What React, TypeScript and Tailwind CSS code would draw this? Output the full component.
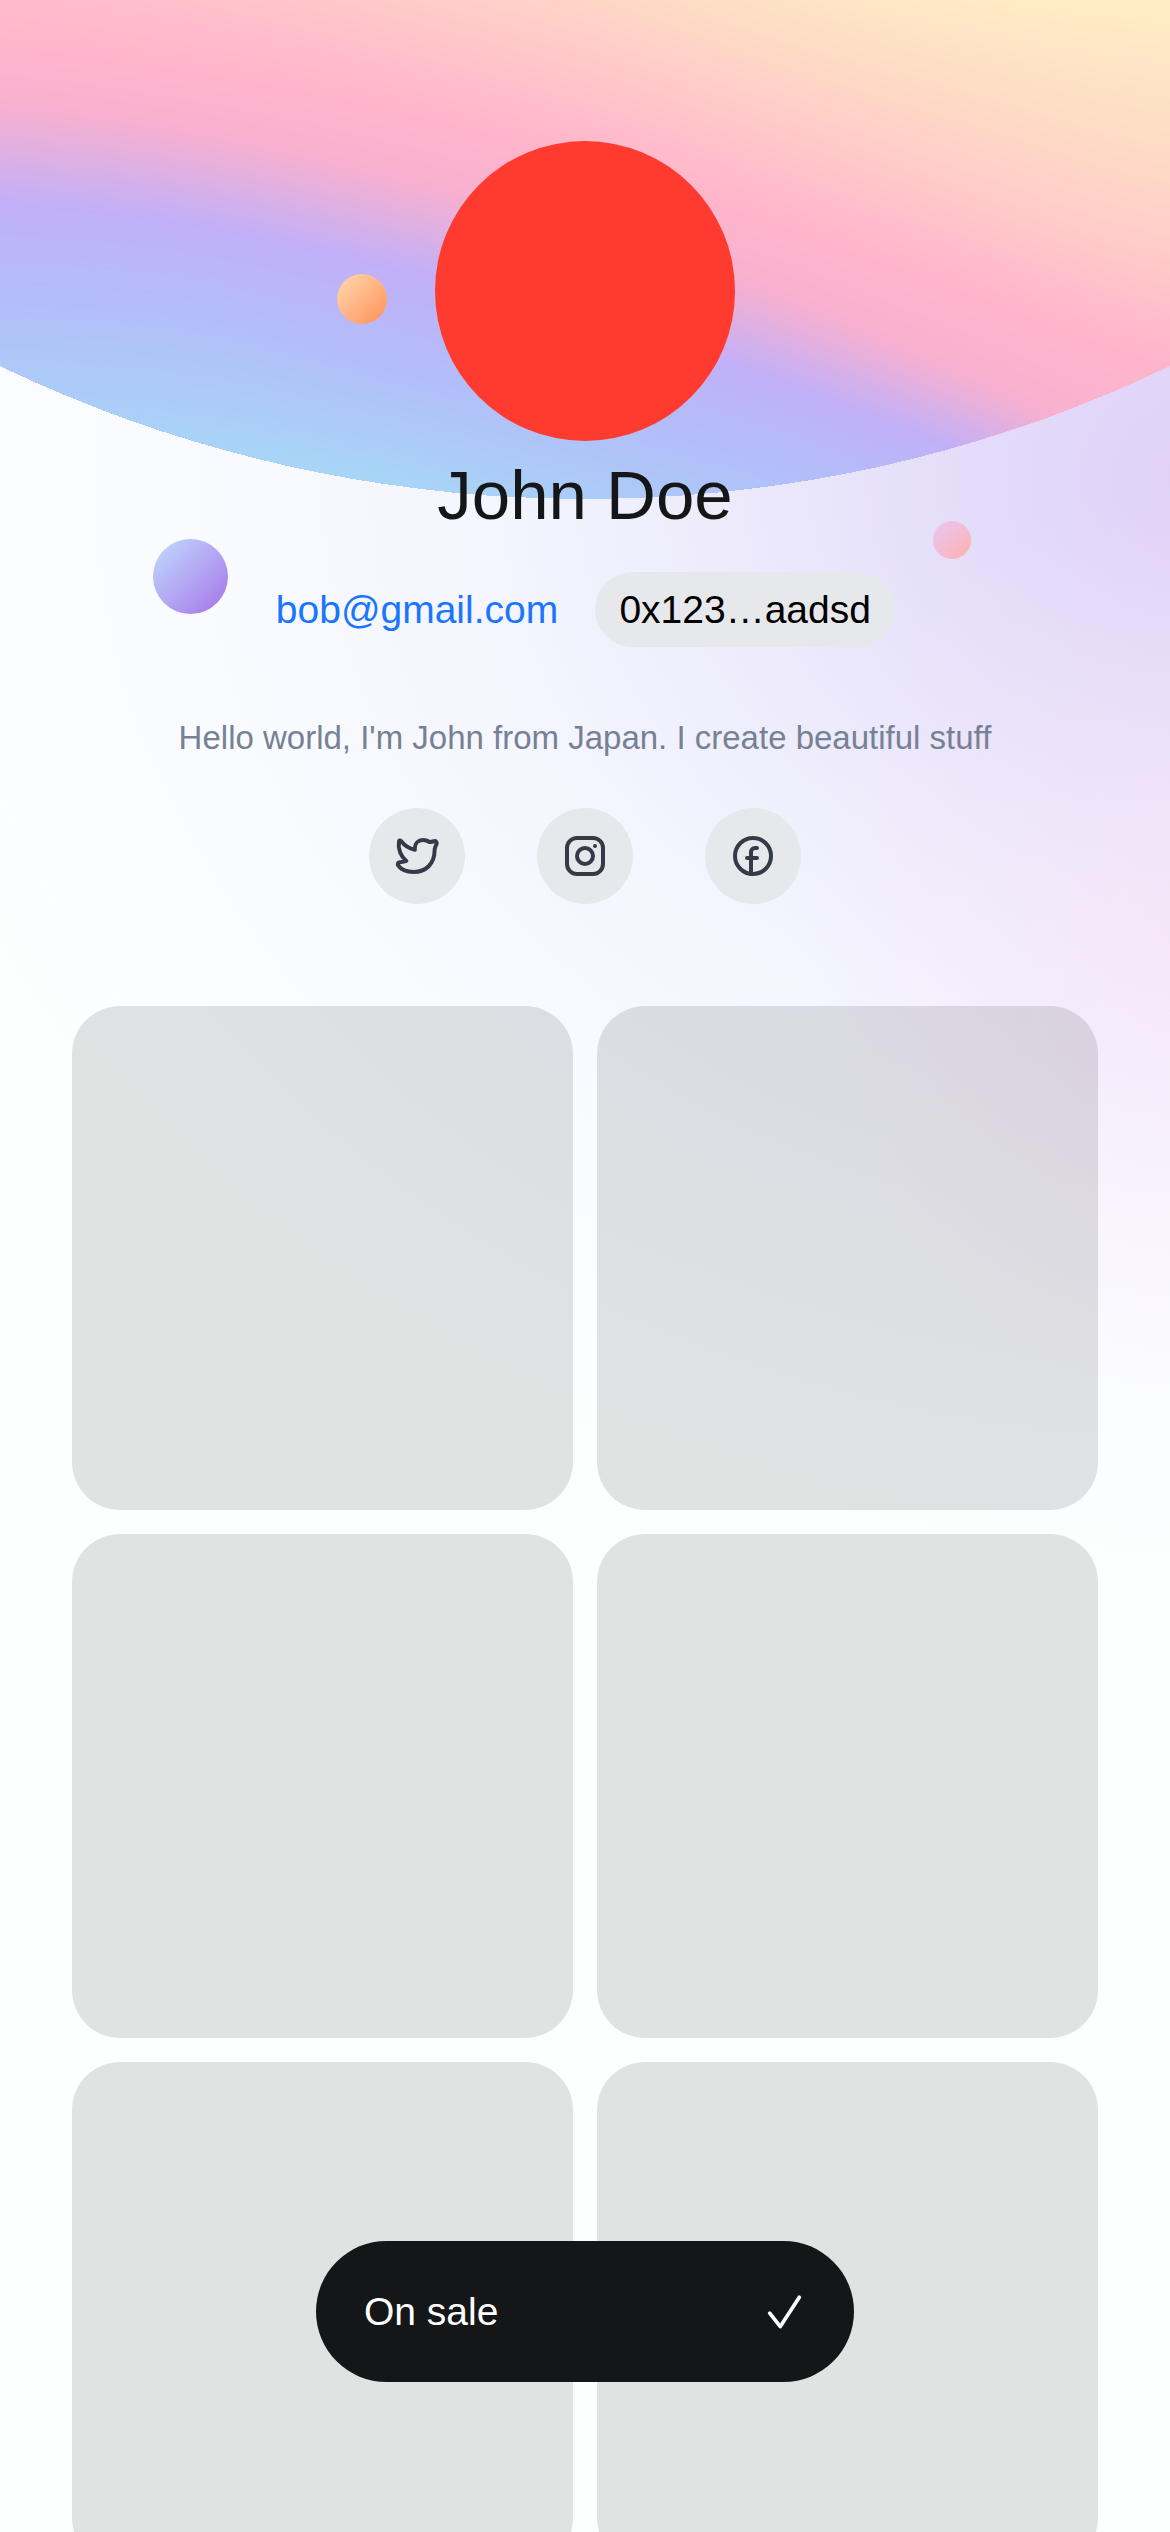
import React from "react";

type Rgb = [number, number, number];
type Band = { color: Rgb; ys: number[] };

const columns = [0, 195, 390, 585, 780, 975, 1170];

// Each band lists the height at which its colour crosses every column.
const bands: Band[] = [
  { color: [255, 236, 197], ys: [-300, -250, -190, -125, -60, -12, 8] },
  { color: [254, 220, 197], ys: [-190, -150, -100, -35, 35, 90, 142] },
  { color: [255, 203, 201], ys: [-105, -60, -5, 48, 118, 190, 253] },
  { color: [255, 181, 204], ys: [42, 67, 104, 156, 220, 288, 354] },
  { color: [247, 176, 208], ys: [105, 131, 175, 228, 294, 378, 465] },
  { color: [193, 176, 248], ys: [203, 224, 267, 315, 382, 457, 540] },
  { color: [178, 190, 249], ys: [302, 317, 370, 415, 466, 545, 630] },
  { color: [172, 204, 248], ys: [388, 402, 440, 495, 565, 645, 730] },
  { color: [166, 216, 246], ys: [446, 464, 492, 560, 640, 730, 820] },
];

const STEPS = 28;

function curve(ys: number[]) {
  let d = `M0 ${ys[0].toFixed(2)}`;
  for (let i = 0; i < ys.length - 1; i++) {
    const before = ys[Math.max(i - 1, 0)];
    const after = ys[Math.min(i + 2, ys.length - 1)];
    const c1 = ys[i] + (ys[i + 1] - before) / 6;
    const c2 = ys[i + 1] - (after - ys[i]) / 6;
    d += `C${columns[i] + 65} ${c1.toFixed(2)} ${columns[i + 1] - 65} ${c2.toFixed(2)} ${columns[i + 1]} ${ys[i + 1].toFixed(2)}`;
  }
  return `${d}V900H0Z`;
}

const layers = bands.slice(0, -1).flatMap((band, i) => {
  const next = bands[i + 1];
  return Array.from({ length: STEPS }, (_, s) => {
    const t = s / STEPS;
    const mix = (a: number, b: number) => a + (b - a) * t;
    const [r, g, b] = band.color.map((c, k) => Math.round(mix(c, next.color[k])));
    return { d: curve(band.ys.map((y, k) => mix(y, next.ys[k]))), fill: `rgb(${r},${g},${b})` };
  });
});

function Banner() {
  return (
    <svg className="absolute left-0 top-0" width="1170" height="500" viewBox="0 0 1170 500">
      <defs>
        <clipPath id="dome">
          <circle cx="585" cy="-855" r="1353.5" />
        </clipPath>
      </defs>
      <g clipPath="url(#dome)">
        <rect width="1170" height="500" fill="#ffecc5" />
        {layers.map((l, i) => (
          <path key={i} d={l.d} fill={l.fill} />
        ))}
      </g>
    </svg>
  );
}

const iconProps = {
  width: 48,
  height: 48,
  viewBox: "0 0 24 24",
  fill: "none",
  stroke: "#363a48",
  strokeWidth: 2,
  strokeLinecap: "round" as const,
  strokeLinejoin: "round" as const,
};

function TwitterIcon() {
  return (
    <svg {...iconProps} className="overflow-visible">
      <path d="M3.900 4.400C5.600 6.600 8 8.300 10.900 8.900V8.200C10.900 5.700 12.600 4 15 4c1.300 0 2.200.3 3.200 1 .8 0 1.600-.2 2.400-.4.900-.2 1.500.5 1.200 1.300l-.7 1.700c-.3.700-.3 1.100-.3 1.700C20.700 15.900 16.500 20 10.300 20c-3 0-6-.9-7.600-3.100-.6-.8-.3-1.700.7-1.800 1.100-.1 2.300-.2 3.300-.6C4 12.400 2.300 8.600 3 4.700c.1-.5.600-.6.900-.3z" />
    </svg>
  );
}

function InstagramIcon() {
  return (
    <svg {...iconProps}>
      <rect x="3" y="3" width="18" height="18" rx="5" />
      <circle cx="12" cy="12" r="4" />
      <circle cx="17" cy="7" r="1" fill="#363a48" stroke="none" />
    </svg>
  );
}

function FacebookIcon() {
  return (
    <svg {...iconProps}>
      <circle cx="12" cy="12" r="9" />
      <path d="M11 21V10a2 2 0 0 1 2-2h1M9 13h5" />
    </svg>
  );
}

export default function App() {
  return (
    <main className="relative h-[2532px] w-[1170px] overflow-hidden bg-[#fcfffe] bg-[radial-gradient(1400px_1100px_at_1230px_480px,#dfcef7_0%,#e2d8f9_13%,#e6e1fa_24%,#eeecfc_38%,#f4f5fe_53%,#f9faff_70%,#fbfcff_85%,#fcfffe_100%)] font-['Liberation_Sans',Arial,sans-serif]">
      <div className="absolute inset-0 bg-[radial-gradient(400px_460px_at_1200px_940px,rgba(248,224,246,0.6)_0%,rgba(248,224,246,0.3)_45%,rgba(248,224,246,0)_100%)]" />
      <Banner />
      <span className="absolute left-[337px] top-[274px] size-[50px] rounded-full bg-linear-to-br from-[#ffd9b0] to-[#ff8f56]" />
      <span className="absolute left-[153px] top-[539px] size-[75px] rounded-full bg-linear-to-br from-[#bfdcff] to-[#a472e6]" />
      <span className="absolute left-[933px] top-[521px] size-[37.500px] rounded-full bg-linear-to-br from-[#e8c6f6] to-[#ffb0ac]" />

      <div className="relative flex flex-col items-center pt-[141px]">
        <div className="size-[300px] rounded-full bg-[#ff3b30]" />
        <h1 className="mt-[14px] flex h-[82px] items-center whitespace-nowrap text-[69px] text-[#151617]">John Doe</h1>
        <div className="mt-[35px] flex h-[75px] items-center gap-[37px] pl-[1px]">
          <a className="whitespace-nowrap pt-[2px] text-[39px] text-[#1a75ff]">bob@gmail.com</a>
          <div className="flex h-[75px] w-[300px] items-center justify-center whitespace-nowrap rounded-full bg-[#e6e8eb] pt-[2px] text-[39px] text-black">
            0x123…aadsd
          </div>
        </div>
        <p className="mt-[67px] flex h-[48px] items-center whitespace-nowrap text-[33px] text-[#778196]">
          Hello world, I'm John from Japan. I create beautiful stuff
        </p>
        <div className="mt-[46px] flex gap-[72px]">
          {[TwitterIcon, InstagramIcon, FacebookIcon].map((Icon, i) => (
            <div key={i} className="flex size-[96px] items-center justify-center rounded-full bg-[#e6e8eb]">
              <Icon />
            </div>
          ))}
        </div>
        <div className="mt-[102px] grid w-full grid-cols-2 gap-[24px] px-[72px]">
          {Array.from({ length: 6 }, (_, i) => (
            <div key={i} className="h-[504px] rounded-[48px] bg-black/11" />
          ))}
        </div>
      </div>

      <div className="absolute left-[316px] top-[2241px] flex h-[141px] w-[538px] items-center justify-between rounded-full bg-[#151618] px-12 text-[39px] text-white">
        <span className="pt-[2px]">On sale</span>
        <svg width="42" height="42" viewBox="0 0 42 42" fill="none" stroke="#fff" strokeWidth="3.700" strokeLinecap="round" strokeLinejoin="round">
          <path d="M5.700 22.200 16.300 35.600 35.300 6.200" />
        </svg>
      </div>
    </main>
  );
}
